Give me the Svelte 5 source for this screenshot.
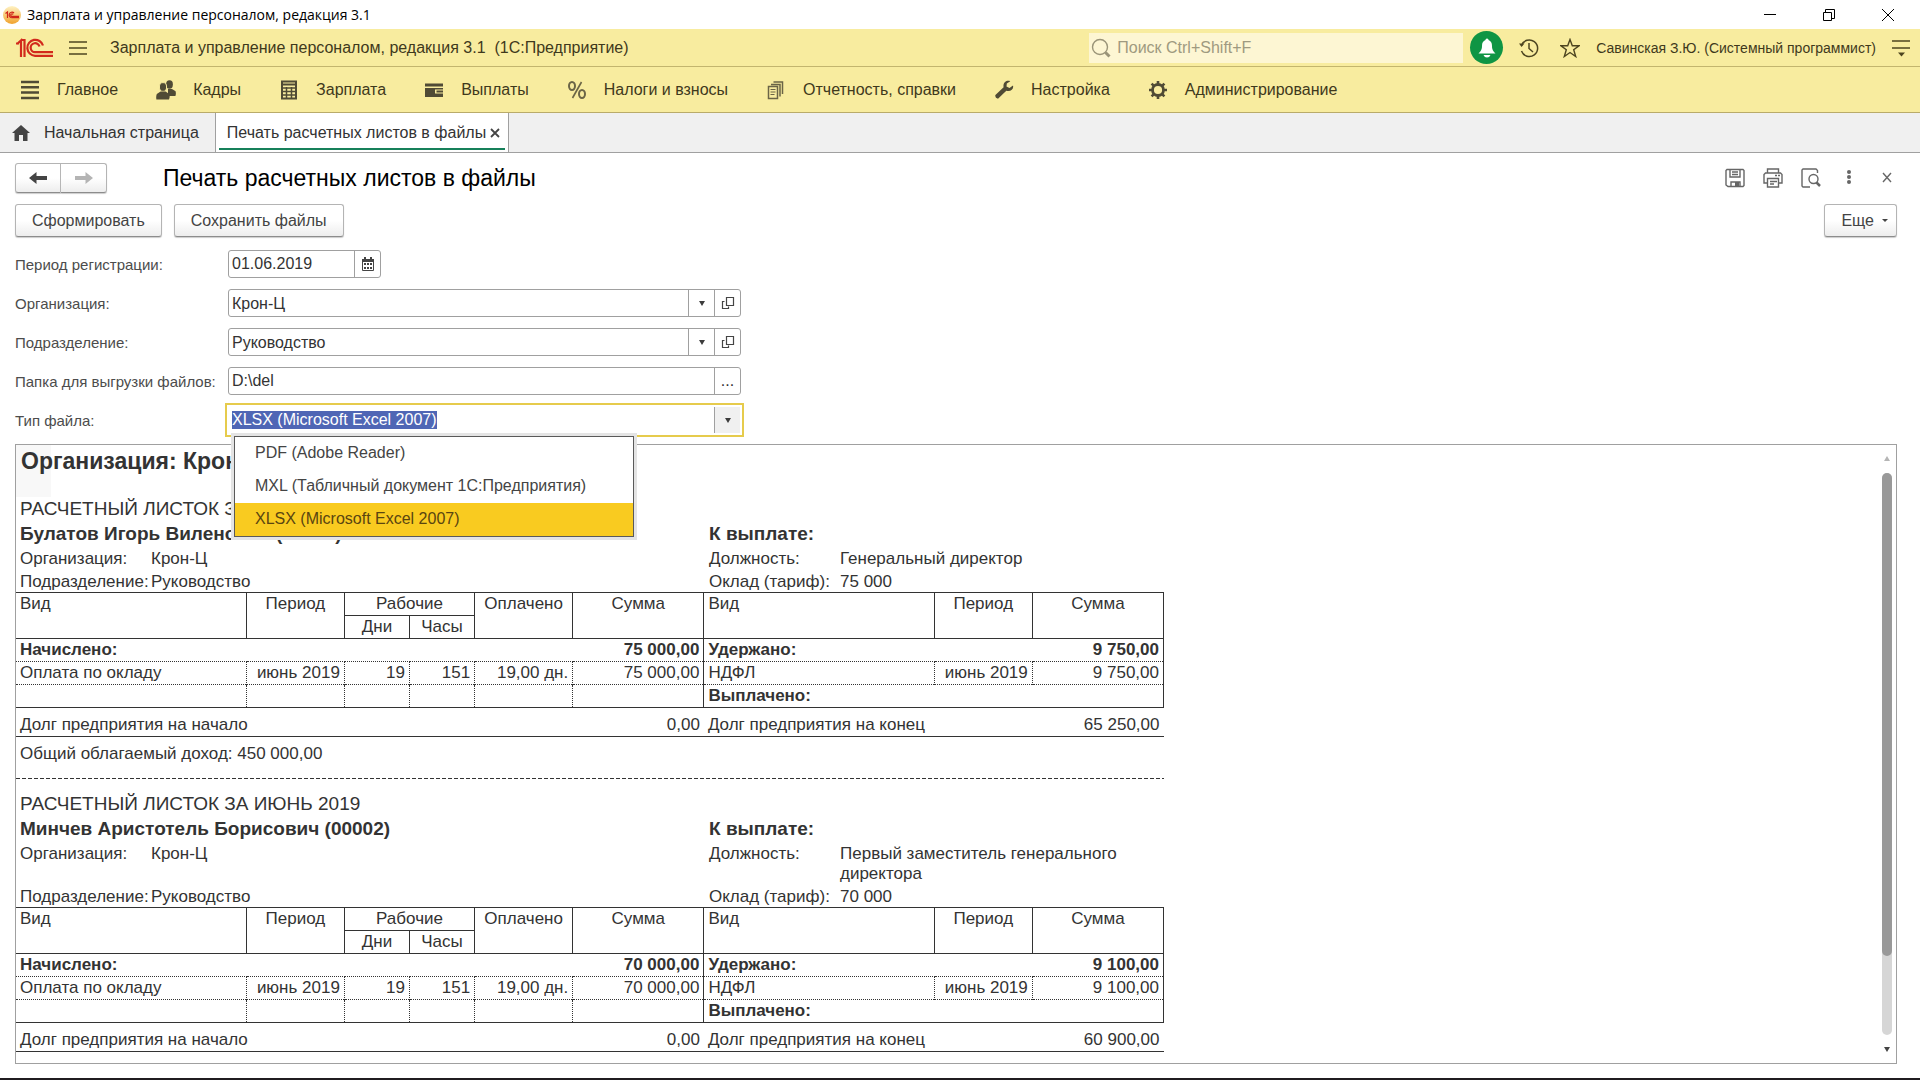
<script>
    import { onMount } from 'svelte';

    const sections = [
        { icon: 'list', label: 'Главное' },
        { icon: 'people', label: 'Кадры' },
        { icon: 'calc', label: 'Зарплата' },
        { icon: 'wallet', label: 'Выплаты' },
        { icon: 'percent', label: 'Налоги и взносы' },
        { icon: 'docs', label: 'Отчетность, справки' },
        { icon: 'wrench', label: 'Настройка' },
        { icon: 'gear', label: 'Администрирование' }
    ];

    const fileTypes = [
        'PDF (Adobe Reader)',
        'MXL (Табличный документ 1С:Предприятия)',
        'XLSX (Microsoft Excel 2007)'
    ];

    const slips = [
        {
            name: 'Булатов Игорь Виленович (00001)',
            position: 'Генеральный директор',
            salary: '75 000',
            accrued: '75 000,00',
            withheld: '9 750,00',
            debtEnd: '65 250,00',
            income: '450 000,00'
        },
        {
            name: 'Минчев Аристотель Борисович (00002)',
            position: 'Первый заместитель генерального директора',
            salary: '70 000',
            accrued: '70 000,00',
            withheld: '9 100,00',
            debtEnd: '60 900,00'
        }
    ];

    let fileType = $state(fileTypes[2]);
    let fileTypeInput;

    onMount(() => {
        fileTypeInput.focus();
        fileTypeInput.select();
    });
</script>

{#snippet sectionIcon(name)}
    <svg width="20" height="20" viewBox="0 0 20 20" fill="none" stroke="#504b35" aria-hidden="true">
        {#if name === 'list'}
            <path d="M1 2h18M1 7.3h18M1 12.600h18M1 18h18" stroke-width="2.5" />
        {:else if name === 'people'}
            <g fill="#504b35" stroke="none">
                <ellipse cx="13.5" cy="4.5" rx="3.4" ry="4.2" />
                <path d="M12 9h4l3.6 2.2q.6 3-.2 4.8H12z" />
                <ellipse cx="7" cy="7" rx="3.6" ry="4.4" stroke="#f8ec9f" />
                <path d="M4.6 11.5h5l3.6 2.4q1 3-.2 5.6H.4q-.6-3 .4-5.6z" />
            </g>
        {:else if name === 'calc'}
            <rect x="3" y="1.5" width="14" height="17" stroke-width="2" />
            <path d="M3 4.5h14" stroke-width="2" />
            <path d="M3 8h14M3 11.5h14M3 15h14M7.5 7v11M12.5 7v11" stroke-width="1.5" />
        {:else if name === 'wallet'}
            <path d="M1 3.500h18v3H1zM1 8h18v1.500h-8v4h8V17H1zM12.500 10.500H19v2h-6.500z" fill="#504b35" stroke="none" />
        {:else if name === 'percent'}
            <g stroke="#6b6546">
                <ellipse cx="5" cy="6" rx="3" ry="4" stroke-width="2" />
                <ellipse cx="15" cy="14" rx="3" ry="4" stroke-width="2" />
                <path d="M14.5 2 5.5 18" stroke-width="1.6" />
            </g>
        {:else if name === 'docs'}
            <g stroke="#6b6546">
                <path d="M2.5 6.5h9v12h-9zM5 4.5h9v12M7.5 2h9v12" stroke-width="1.5" />
                <path d="M4.5 9.5h5M4.5 12h5M4.5 14.5h4" stroke-width="1.2" />
            </g>
        {:else if name === 'wrench'}
            <path d="M19 5.500 15.500 8 12.500 6.500 12.800 3.500 16.300 1.200C12.500-.2 8.700 2.600 9.600 7.300L1.400 15q-.8 3.200 2.600 3.800L12.300 10.800C16.500 12 20 9.500 19 5.500z" fill="#504b35" stroke="none" />
        {:else}
            <circle cx="10" cy="10" r="5.5" stroke-width="2.8" />
            <path d="M10 1v4M10 15v4M1 10h4M15 10h4M3.600 3.600l2.800 2.800M13.600 13.600l2.800 2.800M3.600 16.400l2.800-2.800M13.600 6.400l2.800-2.800" stroke-width="2.6" />
        {/if}
    </svg>
{/snippet}

{#snippet caret()}
    <svg width="8" height="5" viewBox="0 0 8 5" aria-hidden="true"><path d="M1 0h6L4 5z" fill="#3c3c3c" /></svg>
{/snippet}

{#snippet lookup(id, label, value)}
    <label for={id}>{label}</label>
    <div class="field">
        <div class="select-wrap">
            <select {id}><option>{value}</option></select>
            <span class="select-caret">{@render caret()}</span>
        </div>
        <button class="field-btn" aria-label="Открыть">
            <svg width="14" height="14" viewBox="0 0 14 14" fill="none" stroke="#444" stroke-width="1.2" aria-hidden="true">
                <path d="M5.5 1.5h7v8h-7zM3.5 5.5h-2v7h6v-2" />
            </svg>
        </button>
    </div>
{/snippet}

<div class="window">
    <div class="title-bar">
        <svg width="18" height="20" viewBox="0 0 18 20" aria-hidden="true">
            <defs>
                <linearGradient id="app-icon" x1="0" y1="0" x2="0" y2="1">
                    <stop offset="0" stop-color="#fff3c4" />
                    <stop offset="1" stop-color="#f0a22c" />
                </linearGradient>
            </defs>
            <circle cx="9" cy="10" r="9" fill="url(#app-icon)" />
            <path d="M2.500 8.500 4.500 7v6M11 8a2.800 2.800 0 1 0-1.500 4.700H16M10 9.600a1.200 1.200 0 1 0-.8 1.700H16" fill="none" stroke="#cf2418" stroke-width="1.2" />
        </svg>
        <span>Зарплата и управление персоналом, редакция 3.1</span>
        <div class="window-buttons">
            <button aria-label="Свернуть"><svg width="14" height="14" viewBox="0 0 14 14"><path d="M1 6.5h12" stroke="#000" /></svg></button>
            <button aria-label="Восстановить"><svg width="14" height="14" viewBox="0 0 14 14"><path d="M1.5 4.5h8v8h-8zM3.5 4V1.5h9v9H10" fill="none" stroke="#000" /></svg></button>
            <button aria-label="Закрыть"><svg width="14" height="14" viewBox="0 0 14 14"><path d="M1 1l12 12M13 1 1 13" stroke="#000" /></svg></button>
        </div>
    </div>

    <header class="app-bar">
        <svg class="logo" width="38" height="20" viewBox="0 0 38 20" fill="none" stroke="#d22a1c" stroke-width="2.2" aria-hidden="true">
            <path d="M1 6 5 2.500V19M0 5.500h3M8.500 1v18M5 2h4.500" />
            <path d="M27 7.500a8 8 0 1 0-8 10.300h18M23.500 8.500a4.500 4.500 0 1 0-4.500 5.700h18" />
        </svg>
        <button class="plain" aria-label="Меню">
            <svg width="18" height="16" viewBox="0 0 18 16"><path d="M0 2h18M0 8h18M0 14h18" stroke="#4d4520" stroke-width="1.5" /></svg>
        </button>
        <span class="app-name">Зарплата и управление персоналом, редакция 3.1&nbsp; (1С:Предприятие)</span>
        <div class="search">
            <svg width="20" height="20" viewBox="0 0 20 20" fill="none" stroke="#9a9478" aria-hidden="true">
                <circle cx="9" cy="9" r="7.5" stroke-width="1.4" />
                <path d="m14.5 14.5 4 4" stroke-width="3" />
            </svg>
            <input type="search" placeholder="Поиск Ctrl+Shift+F" aria-label="Поиск" />
        </div>
        <button class="bell" aria-label="Уведомления">
            <svg width="20" height="20" viewBox="0 0 20 20"><path d="M10 .5c1 0 1.500.8 1.500 1.600C14 3 15 5 15 8c0 4 1.500 5.500 3.500 7.500h-17C3.500 13.500 5 12 5 8c0-3 1-5 3.500-5.900C8.500 1.300 9 .5 10 .5zM6.500 17h7q-1 2.500-3.500 2.500T6.500 17z" fill="#fff" /></svg>
        </button>
        <button class="plain" aria-label="История">
            <svg width="20" height="20" viewBox="0 0 20 20" fill="none" stroke="#4d4520" stroke-width="1.5">
                <path d="M2.500 7.500a8.300 8.300 0 1 1 0 5.500M10 5v5.500l4 3.500" />
                <path d="M0 5.500h5.500L2.500 9z" fill="#4d4520" stroke="none" />
            </svg>
        </button>
        <button class="plain" aria-label="Избранное">
            <svg width="20" height="20" viewBox="0 0 20 20" fill="none" stroke="#4d4520" stroke-width="1.4">
                <path d="m10 1.500 2.300 6.300h6.700l-5.300 4 2 6.700-5.700-4-5.700 4 2-6.700L1 7.800h6.700z" />
            </svg>
        </button>
        <span class="user">Савинская З.Ю. (Системный программист)</span>
        <button class="plain" aria-label="Сервис">
            <svg width="18" height="18" viewBox="0 0 18 18"><path d="M0 2h18M0 9h18" stroke="#4d4520" stroke-width="1.5" /><path d="M6 13.500h7l-3.500 4z" fill="#4d4520" /></svg>
        </button>
    </header>

    <nav class="sections">
        {#each sections as section}
            <a href="#{section.icon}">{@render sectionIcon(section.icon)}{section.label}</a>
        {/each}
    </nav>

    <div class="tabs">
        <a class="tab home" href="#home">
            <svg width="18" height="16" viewBox="0 0 18 16" aria-hidden="true"><path d="M9 0 0 8h2.500v8H7v-6h4v6h4.500V8H18z" fill="#444" /></svg>
            Начальная страница
        </a>
        <div class="tab active">
            <a href="#print">Печать расчетных листов в файлы</a>
            <button class="plain" aria-label="Закрыть вкладку">
                <svg width="10" height="10" viewBox="0 0 10 10"><path d="m1 1 8 8M9 1 1 9" stroke="#444" stroke-width="1.8" /></svg>
            </button>
        </div>
    </div>

    <main>
        <div class="form-head">
            <div class="history">
                <button aria-label="Назад"><svg width="18" height="12" viewBox="0 0 18 12"><path d="M7.500 0v4H18v4H7.500v4L0 6z" fill="#444" /></svg></button>
                <button aria-label="Вперед"><svg width="18" height="12" viewBox="0 0 18 12"><path d="M10.500 0v4H0v4h10.500v4L18 6z" fill="#b4b4b4" /></svg></button>
            </div>
            <h1>Печать расчетных листов в файлы</h1>
            <div class="form-tools">
                <button class="plain" aria-label="Сохранить">
                    <svg width="20" height="20" viewBox="0 0 20 20" fill="none" stroke="#666" stroke-width="1.4"><path d="M2 1.500h16l1 1v15l-1 1H3L1 17V2.500zM5 2v7h10V2M6 18.500V14h9v4.500M7 4h6M7 6.500h6" /><path d="M10 14h4v4h-4z" fill="#666" stroke="none" /></svg>
                </button>
                <button class="plain" aria-label="Печать">
                    <svg width="20" height="20" viewBox="0 0 20 20" fill="none" stroke="#666" stroke-width="1.4"><path d="M4.500 5V1h11v4M4.500 15H1V6.500L2.500 5h15L19 6.500V15h-3.500M4.500 10.500h11V19h-11zM7 13.500h7M7 16h4M12 7.500h2M15 7.500h2" /></svg>
                </button>
                <button class="plain" aria-label="Просмотр">
                    <svg width="20" height="20" viewBox="0 0 20 20" fill="none" stroke="#666" stroke-width="1.4"><path d="M9 19H2l-1-1V2l1-1h13l1.500 1.500V5" /><circle cx="12.500" cy="11" r="4.500" /><path d="m15.500 14.500 3.500 3.500" stroke-width="2.5" /></svg>
                </button>
                <button class="plain" aria-label="Дополнительно">
                    <svg width="20" height="20" viewBox="0 0 20 20"><g fill="#666"><circle cx="10" cy="4" r="2" /><circle cx="10" cy="9" r="2" /><circle cx="10" cy="14" r="2" /></g></svg>
                </button>
                <button class="plain" aria-label="Закрыть">
                    <svg width="20" height="20" viewBox="0 0 20 20"><path d="m6 5 8 9M14 5l-8 9" stroke="#666" stroke-width="1.4" /></svg>
                </button>
            </div>
        </div>

        <div class="commands">
            <button class="cmd">Сформировать</button>
            <button class="cmd">Сохранить файлы</button>
            <button class="cmd more">Еще <svg width="6" height="3" viewBox="0 0 6 3" aria-hidden="true"><path d="M0 0h6L3 3z" fill="#444" /></svg></button>
        </div>

        <div class="form">
            <label for="period">Период регистрации:</label>
            <div class="field date">
                <input id="period" value="01.06.2019" />
                <button class="field-btn" aria-label="Календарь">
                    <svg width="14" height="14" viewBox="0 0 14 14" aria-hidden="true">
                        <path d="M1.500 2.500h11v11h-11z" fill="none" stroke="#444" />
                        <path d="M1 2h12v3H1zM3 0h2v3H3zM9 0h2v3H9zM3 6h2v2H3zM6 6h2v2H6zM9 6h2v2H9zM3 10h2v2H3zM6 10h2v2H6zM9 10h2v2H9z" fill="#444" />
                    </svg>
                </button>
            </div>

            {@render lookup('organization', 'Организация:', 'Крон-Ц')}
            {@render lookup('department', 'Подразделение:', 'Руководство')}

            <label for="folder">Папка для выгрузки файлов:</label>
            <div class="field">
                <input id="folder" value="D:\del" />
                <button class="field-btn" aria-label="Выбрать папку">...</button>
            </div>

            <label for="file-type">Тип файла:</label>
            <div class="field focused">
                <input id="file-type" bind:value={fileType} bind:this={fileTypeInput} />
                <button class="field-btn" aria-label="Показать список">{@render caret()}</button>
                <select class="popup" size="3" aria-label="Варианты типа файла" bind:value={fileType}>
                    {#each fileTypes as type}
                        <option value={type}>{type}</option>
                    {/each}
                </select>
            </div>
        </div>

        <div class="report">
            <div class="sheet">
                <h2>Организация: Крон-Ц</h2>

                {#each slips as slip}
                    <section>
                        <div class="slip-title">РАСЧЕТНЫЙ ЛИСТОК ЗА ИЮНЬ 2019</div>
                        <div class="slip-name"><span>{slip.name}</span><span>К выплате:</span></div>
                        <div class="slip-info">
                            <span>Организация:</span><span>Крон-Ц</span>
                            <span>Должность:</span><span>{slip.position}</span>
                            <span>Подразделение:</span><span>Руководство</span>
                            <span>Оклад (тариф):</span><span>{slip.salary}</span>
                        </div>

                        <table>
                            <colgroup>
                                <col class="kind" /><col class="period" /><col class="hours" /><col class="hours" />
                                <col class="period" /><col class="sum" />
                                <col class="kind" /><col class="period" /><col class="sum" />
                            </colgroup>
                            <thead>
                                <tr>
                                    <th class="left first" rowspan="2">Вид</th>
                                    <th rowspan="2">Период</th>
                                    <th colspan="2">Рабочие</th>
                                    <th rowspan="2">Оплачено</th>
                                    <th rowspan="2">Сумма</th>
                                    <th class="left" rowspan="2">Вид</th>
                                    <th rowspan="2">Период</th>
                                    <th rowspan="2">Сумма</th>
                                </tr>
                                <tr><th>Дни</th><th>Часы</th></tr>
                            </thead>
                            <tbody>
                                <tr class="total">
                                    <td colspan="5">Начислено:</td>
                                    <td class="num edge">{slip.accrued}</td>
                                    <td colspan="2">Удержано:</td>
                                    <td class="num edge">{slip.withheld}</td>
                                </tr>
                                <tr class="detail">
                                    <td>Оплата по окладу</td>
                                    <td class="num">июнь 2019</td>
                                    <td class="num">19</td>
                                    <td class="num">151</td>
                                    <td class="num">19,00 дн.</td>
                                    <td class="num edge">{slip.accrued}</td>
                                    <td>НДФЛ</td>
                                    <td class="num">июнь 2019</td>
                                    <td class="num edge">{slip.withheld}</td>
                                </tr>
                                <tr class="detail last">
                                    <td>&nbsp;</td><td></td><td></td><td></td><td></td><td class="edge"></td>
                                    <td class="edge strong" colspan="3">Выплачено:</td>
                                </tr>
                            </tbody>
                            <tfoot>
                                <tr>
                                    <td colspan="5">Долг предприятия на начало</td>
                                    <td class="num">0,00</td>
                                    <td colspan="2">Долг предприятия на конец</td>
                                    <td class="num">{slip.debtEnd}</td>
                                </tr>
                            </tfoot>
                        </table>

                        {#if slip.income}
                            <div class="income">Общий облагаемый доход: {slip.income}</div>
                            <div class="cut"></div>
                        {/if}
                    </section>
                {/each}
            </div>

            <div class="scroll">
                <svg width="8" height="6" viewBox="0 0 8 6" aria-hidden="true"><path d="M1 5h6L4 0z" fill="#b5b5b5" /></svg>
                <div class="track"><div class="thumb"></div></div>
                <svg width="8" height="6" viewBox="0 0 8 6" aria-hidden="true"><path d="M1 1h6L4 6z" fill="#444" /></svg>
            </div>
        </div>
    </main>
</div>

<style>
    :global(body) {
        margin: 0;
        background: #fff;
    }

    .window {
        display: flex;
        flex-direction: column;
        box-sizing: border-box;
        height: 100vh;
        border-bottom: 2px solid #201c20;
        font: 16px "Liberation Sans", Arial, sans-serif;
        color: #333;
        overflow: hidden;
    }

    button, input, select {
        font: inherit;
        color: inherit;
    }

    button {
        display: flex;
        align-items: center;
        justify-content: center;
        padding: 0;
    }

    a {
        color: inherit;
        text-decoration: none;
    }

    svg {
        flex: none;
    }

    .plain, .window-buttons button {
        border: none;
        background: none;
    }

    /* Window title */
    .title-bar {
        display: flex;
        align-items: center;
        height: 29px;
        padding: 0 3px;
        gap: 6px;
        font: 14px "Open Sans", "Noto Sans", sans-serif;
        color: #000;
    }

    .window-buttons {
        display: flex;
        margin-left: auto;
    }

    .window-buttons button {
        width: 59px;
    }

    /* Yellow header */
    .app-bar {
        display: flex;
        align-items: center;
        height: 37px;
        padding: 0 10px 0 16px;
        background: #f8ec9f;
        border-bottom: 1px solid #c3b56e;
        color: #3f391c;
    }

    .logo {
        margin-right: 15px;
    }

    .app-name {
        margin-left: 23px;
    }

    .search {
        display: flex;
        align-items: center;
        gap: 6px;
        box-sizing: border-box;
        width: 374px;
        height: 30px;
        margin-left: auto;
        padding-left: 2px;
        background: #fdf6d3;
    }

    .search input {
        flex: 1;
        min-width: 0;
        padding: 0;
        border: none;
        outline: none;
        background: none;
    }

    .search input::placeholder {
        color: #9f9a80;
    }

    .bell {
        width: 33px;
        height: 33px;
        margin: 0 16px 0 7px;
        border: none;
        border-radius: 50%;
        background: #0f9544;
    }

    .bell + .plain {
        margin-right: 21px;
    }

    .user {
        margin: 0 16px;
        font-size: 14px;
    }

    .sections {
        display: flex;
        align-items: center;
        gap: 38px;
        height: 45px;
        padding-left: 20px;
        background: #f8ec9f;
        border-bottom: 1px solid #b9ab6a;
        color: #3f391c;
    }

    .sections a {
        display: flex;
        align-items: center;
        gap: 17px;
    }

    .tabs {
        display: flex;
        height: 39px;
        background: #f0f0f0;
        border-bottom: 1px solid #a0a0a0;
    }

    .tab {
        display: flex;
        align-items: center;
        position: relative;
    }

    .home {
        gap: 14px;
        padding: 0 16px 0 12px;
    }

    .active {
        gap: 4px;
        padding: 0 8px 0 11px;
        background: #fff;
        border-left: 1px solid #a0a0a0;
        border-right: 1px solid #a0a0a0;
    }

    .active::after {
        content: "";
        position: absolute;
        left: 3px;
        right: 3px;
        bottom: 2px;
        height: 2px;
        background: #17805a;
    }

    /* Form */
    main {
        display: flex;
        flex-direction: column;
        flex: 1;
        min-height: 0;
        padding: 10px 23px 14px 15px;
    }

    .form-head {
        display: flex;
        align-items: center;
        height: 30px;
    }

    .history {
        display: flex;
    }

    .history button, .cmd {
        box-sizing: border-box;
        border: 1px solid #b4b4b4;
        border-bottom-color: #8c8c8c;
        background: linear-gradient(#fff 50%, #ededed);
        box-shadow: 0 1px 1px #ccc;
    }

    .history button {
        width: 46px;
        height: 30px;
        border-radius: 3px 0 0 3px;
    }

    .history button + button {
        border-left: none;
        border-radius: 0 3px 3px 0;
    }

    h1 {
        margin: 0 0 0 56px;
        font-size: 23px;
        font-weight: normal;
        color: #000;
    }

    .form-tools {
        display: flex;
        gap: 18px;
        margin-left: auto;
    }

    .commands {
        display: flex;
        gap: 12px;
        margin-top: 11px;
    }

    .cmd {
        height: 33px;
        padding: 0 16px;
        border-radius: 3px;
        color: #444;
    }

    .more {
        gap: 8px;
        margin-left: auto;
        padding-right: 8px;
    }

    .form {
        display: grid;
        grid-template-columns: 213px 513px;
        row-gap: 11px;
        align-items: center;
        margin-top: 13px;
    }

    .form label {
        font-size: 15px;
        color: #4c4c4c;
        white-space: nowrap;
    }

    .field {
        display: flex;
        position: relative;
        box-sizing: border-box;
        height: 28px;
        border: 1px solid #a0a0a0;
        border-radius: 3px;
        background: #fff;
    }

    .date {
        width: 153px;
    }

    .field input, .select-wrap {
        flex: 1;
        min-width: 0;
    }

    .field input, .select-wrap select {
        box-sizing: border-box;
        padding: 0 4px 0 3px;
        border: none;
        outline: none;
        background: none;
    }

    .select-wrap {
        display: flex;
        position: relative;
    }

    .select-wrap select {
        width: 100%;
        appearance: none;
    }

    .select-caret {
        display: flex;
        align-items: center;
        justify-content: center;
        position: absolute;
        inset: 0 0 0 auto;
        width: 25px;
        border-left: 1px solid #a0a0a0;
        pointer-events: none;
    }

    .field-btn {
        box-sizing: border-box;
        width: 26px;
        border: none;
        border-left: 1px solid #a0a0a0;
        background: none;
    }

    .focused {
        border: none;
        border-radius: 0;
        outline: 2px solid #e6cb4c;
        outline-offset: 1px;
        padding: 1px;
    }

    .focused .field-btn {
        background: #f0f0f0;
    }

    .focused input::selection {
        background: #4f66b5;
        color: #fff;
    }

    /* Drop-down list of the file type */
    .popup {
        position: absolute;
        z-index: 2;
        top: 30px;
        left: 6px;
        box-sizing: border-box;
        width: 400px;
        height: 101px;
        padding: 0;
        border: 1px solid #5a5a5a;
        border-radius: 0;
        outline: none;
        background: #fff;
        box-shadow: 0 0 0 3px #e4e4e4;
        overflow: hidden;
    }

    .popup option {
        box-sizing: border-box;
        height: 33px;
        padding: 7px 20px;
        color: #444;
    }

    .popup option:checked {
        background: #f9cb20;
        color: #5a4510;
    }

    /* Printed payslips */
    .report {
        display: flex;
        justify-content: space-between;
        flex: 1;
        min-height: 0;
        margin-top: 10px;
        border: 1px solid #a0a0a0;
        overflow: hidden;
    }

    .sheet {
        width: 1148px;
        font-size: 17px;
        line-height: 22px;
    }

    h2 {
        box-sizing: border-box;
        height: 52px;
        margin: 0;
        padding: 5px 5px 0;
        font-size: 23px;
        background: linear-gradient(#f8f8f8, #f8f8f8) no-repeat 0 0 / 35px 100%;
    }

    .slip-title, .slip-name {
        padding: 0 4px;
        font-size: 19px;
        line-height: 24px;
    }

    .slip-name {
        display: grid;
        grid-template-columns: 689px 1fr;
        font-weight: bold;
        line-height: 25px;
    }

    .slip-info {
        display: grid;
        grid-template-columns: 131px 558px 131px 300px;
        padding-left: 4px;
        line-height: 20px;
    }

    .slip-info span {
        padding-top: 3px;
    }

    table {
        width: 100%;
        table-layout: fixed;
        border-collapse: collapse;
    }

    .kind { width: 230px; }
    .period { width: 98px; }
    .hours { width: 65px; }
    .sum { width: 131px; }

    th, td {
        padding: 0 4px;
        text-align: left;
        font-weight: normal;
        vertical-align: top;
    }

    th {
        border: 1px solid #333;
        text-align: center;
    }

    .first {
        border-left: none;
    }

    .left {
        text-align: left;
    }

    .num {
        text-align: right;
    }

    .total td, .strong {
        font-weight: bold;
    }

    .detail td {
        border-top: 1px dotted #333;
        border-right: 1px dotted #333;
    }

    .last td {
        border-bottom: 1px solid #333;
    }

    tbody .edge {
        border-right: 1px solid #333;
    }

    tfoot td {
        padding-top: 6px;
        border-bottom: 1px solid #333;
    }

    .income {
        padding: 6px 4px 13px;
    }

    .cut {
        height: 1px;
        margin-bottom: 13px;
        background: repeating-linear-gradient(90deg, #333 0 4px, transparent 4px 6px);
    }

    .scroll {
        display: flex;
        flex-direction: column;
        align-items: center;
        gap: 11px;
        width: 10px;
        padding: 11px 4px 11px 0;
    }

    .track {
        flex: 1;
        width: 10px;
        border-radius: 5px;
        background: #d6d6d6;
    }

    .thumb {
        height: 86%;
        border-radius: 5px;
        background: #999;
    }
</style>
